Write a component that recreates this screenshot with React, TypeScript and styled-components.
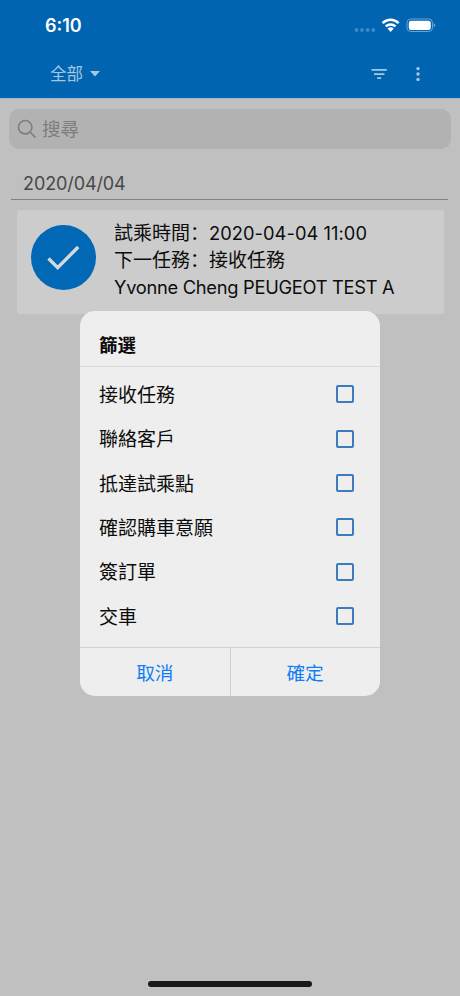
import React from 'react';
import styled, { createGlobalStyle } from 'styled-components';

const Global = createGlobalStyle`
  * { box-sizing: border-box; }
  html, body { margin: 0; padding: 0; }
  body { font-family: Inter, "Noto Sans CJK SC", sans-serif; background: #c0c0c0; }
  button { font: inherit; border: 0; background: none; padding: 0; margin: 0; }
`;

const Screen = styled.div`
  position: relative;
  width: 460px;
  height: 996px;
  display: flex;
  flex-direction: column;
  overflow: hidden;
  background: #c0c0c0;
`;

const Header = styled.header`
  height: 99px;
  flex: none;
  background: #0064b0;
  border-bottom: 1px solid #a0b8cd;
`;

const StatusBar = styled.div`
  height: 50px;
  display: flex;
  align-items: center;
  justify-content: space-between;
  padding: 1px 24px 0 45px;
`;

const Clock = styled.span`
  color: #fff;
  font-size: 18px;
  font-weight: 600;
  line-height: 22px;
`;

const StatusIcons = styled.svg`
  display: block;
  width: 82px;
  height: 20px;
`;

const Toolbar = styled.div`
  height: 48px;
  display: flex;
  align-items: center;
  padding: 0 34px 0 50px;
  color: #a6c8e4;
`;

const ScopeButton = styled.button`
  display: flex;
  align-items: center;
  gap: 7px;
  color: inherit;
  font-size: 16.5px;
  line-height: 24px;
  margin-right: auto;
`;

const ToolIcon = styled.svg<{ $gap?: number }>`
  display: block;
  width: 16px;
  height: 16px;
  margin-left: ${({ $gap }) => $gap ?? 0}px;
`;

const SearchBox = styled.div`
  height: 40px;
  flex: none;
  margin: 10px 9px 0;
  padding: 0 0 2px 8px;
  display: flex;
  align-items: center;
  gap: 5px;
  border-radius: 10px;
  background: #b2b2b2;
  color: #7d7d7f;
  font-size: 18.5px;
`;

const SearchIcon = styled.svg`
  width: 20px;
  height: 20px;
  margin-top: 1px;
`;

const DateHeading = styled.h2`
  height: 51px;
  flex: none;
  margin: 0 12px 0 11px;
  padding: 24px 0 0 12px;
  border-bottom: 1px solid #808080;
  color: #484848;
  font-size: 18px;
  font-weight: 400;
  line-height: 22px;
  letter-spacing: -0.1px;
`;

const TaskCard = styled.article`
  height: 104px;
  flex: none;
  margin: 10px 16px 0 17px;
  padding: 10px 14px 0;
  display: flex;
  gap: 18px;
  border-radius: 2px;
  background: #cccccc;
`;

const DoneBadge = styled.svg`
  width: 65px;
  height: 65px;
  flex: none;
  margin-top: 5px;
`;

const TaskText = styled.div`
  color: #0c0c0c;
  font-size: 19px;
  white-space: nowrap;
`;

const TaskLine = styled.div<{ $tracking?: number }>`
  height: 27px;
  line-height: 27px;
  span { font-size: 18.3px; letter-spacing: ${({ $tracking }) => $tracking ?? 0}px; }
`;

const Dialog = styled.section`
  position: absolute;
  left: 80px;
  top: 311px;
  width: 299.5px;
  height: 385px;
  display: flex;
  flex-direction: column;
  border-radius: 15px;
  overflow: hidden;
  background: #eeeeee;
  color: #0c0c0c;
  font-size: 19px;
`;

const DialogTitle = styled.h1`
  height: 56px;
  flex: none;
  margin: 0;
  padding: 7px 19px 0;
  border-bottom: 1px solid #d9dadb;
  font-size: 18.5px;
  font-weight: 700;
  line-height: 55px;
`;

const OptionList = styled.div`
  flex: 1;
  padding-top: 5px;
`;

const Option = styled.div`
  height: 44.4px;
  display: flex;
  align-items: center;
  justify-content: space-between;
  padding: 0 25.5px 0 19px;
`;

const OptionLabel = styled.span`
  padding-bottom: 1.6px;
`;

const Checkbox = styled.span`
  width: 18px;
  height: 18px;
  border: 2px solid #3c7bbd;
  border-radius: 2px;
`;

const Actions = styled.div`
  height: 49px;
  flex: none;
  display: grid;
  grid-template-columns: 1fr 1fr;
  border-top: 1px solid #d0d1d2;
`;

const Action = styled.button`
  padding-bottom: 2px;
  color: #107ef5;
  font-size: 18.7px;
  & + & { border-left: 1px solid #d0d1d2; }
`;

const HomeIndicator = styled.div`
  width: 164px;
  height: 6px;
  margin: auto auto 9px;
  border-radius: 3px;
  background: #181818;
`;

const options = ['接收任務', '聯絡客戶', '抵達試乘點', '確認購車意願', '簽訂單', '交車'];

export default function App() {
  return (
    <Screen>
      <Global />
      <Header>
        <StatusBar>
          <Clock>6:10</Clock>
          <StatusIcons viewBox="0 0 82 20">
            <g fill="#3c8aca">
              <circle cx="2.5" cy="14" r="1.9" />
              <circle cx="8" cy="14" r="1.9" />
              <circle cx="13.6" cy="14" r="1.9" />
              <circle cx="19.3" cy="14" r="1.9" />
            </g>
            <g fill="none" stroke="#fff" strokeWidth="2.5">
              <path d="M28.6 7.1C33.2 2.6 40 2.6 44.6 7.1" />
              <path d="M31.7 10.4C34.5 7.7 38.7 7.7 41.5 10.4" />
            </g>
            <path d="M33.5 12.6C35.3 10.9 37.9 10.9 39.7 12.6L36.6 15.9Z" fill="#fff" />
            <rect x="53" y="3" width="25.5" height="12.5" rx="3.7" fill="none" stroke="#68a5d8" />
            <rect x="54.8" y="4.7" width="22" height="9.2" rx="2.2" fill="#fff" />
            <path d="M79.7 7.3C81.7 7.9 81.7 10.7 79.7 11.3Z" fill="#68a5d8" />
          </StatusIcons>
        </StatusBar>
        <Toolbar>
          <ScopeButton>
            全部
            <svg width="10" height="6" viewBox="0 0 10 6"><path d="M0 0H10L5 5.5Z" fill="currentColor" /></svg>
          </ScopeButton>
          <ToolIcon viewBox="0 0 16 16" fill="currentColor">
            <path d="M.5 3H15.8V4.8H.5ZM3 7.2H13.4V8.9H3ZM6.2 11.2H10.1V12.9H6.2Z" />
          </ToolIcon>
          <ToolIcon $gap={23} viewBox="0 0 16 16" fill="currentColor">
            <circle cx="8" cy="2.6" r="1.7" />
            <circle cx="8" cy="8" r="1.7" />
            <circle cx="8" cy="13.4" r="1.7" />
          </ToolIcon>
        </Toolbar>
      </Header>
      <SearchBox>
        <SearchIcon viewBox="0 0 20 20" fill="none" stroke="currentColor" strokeWidth="1.6">
          <circle cx="8.2" cy="8.2" r="6.7" />
          <path d="M13 13L18.4 18.4" />
        </SearchIcon>
        搜尋
      </SearchBox>
      <DateHeading>2020/04/04</DateHeading>
      <TaskCard>
        <DoneBadge viewBox="0 0 65 65">
          <circle cx="32.5" cy="32.5" r="32.5" fill="#0068b4" />
          <path d="M17.5 33.5L26.7 42.7L47.2 22" fill="none" stroke="#d3d9dd" strokeWidth="3.4" />
        </DoneBadge>
        <TaskText>
          <TaskLine $tracking={0.05}>試乘時間：<span>2020-04-04 11:00</span></TaskLine>
          <TaskLine>下一任務：接收任務</TaskLine>
          <TaskLine $tracking={-0.28}><span>Yvonne Cheng PEUGEOT TEST A</span></TaskLine>
        </TaskText>
      </TaskCard>
      <Dialog role="dialog">
        <DialogTitle>篩選</DialogTitle>
        <OptionList>
          {options.map((label) => (
            <Option key={label}>
              <OptionLabel>{label}</OptionLabel>
              <Checkbox role="checkbox" aria-checked={false} />
            </Option>
          ))}
        </OptionList>
        <Actions>
          <Action>取消</Action>
          <Action>確定</Action>
        </Actions>
      </Dialog>
      <HomeIndicator />
    </Screen>
  );
}
